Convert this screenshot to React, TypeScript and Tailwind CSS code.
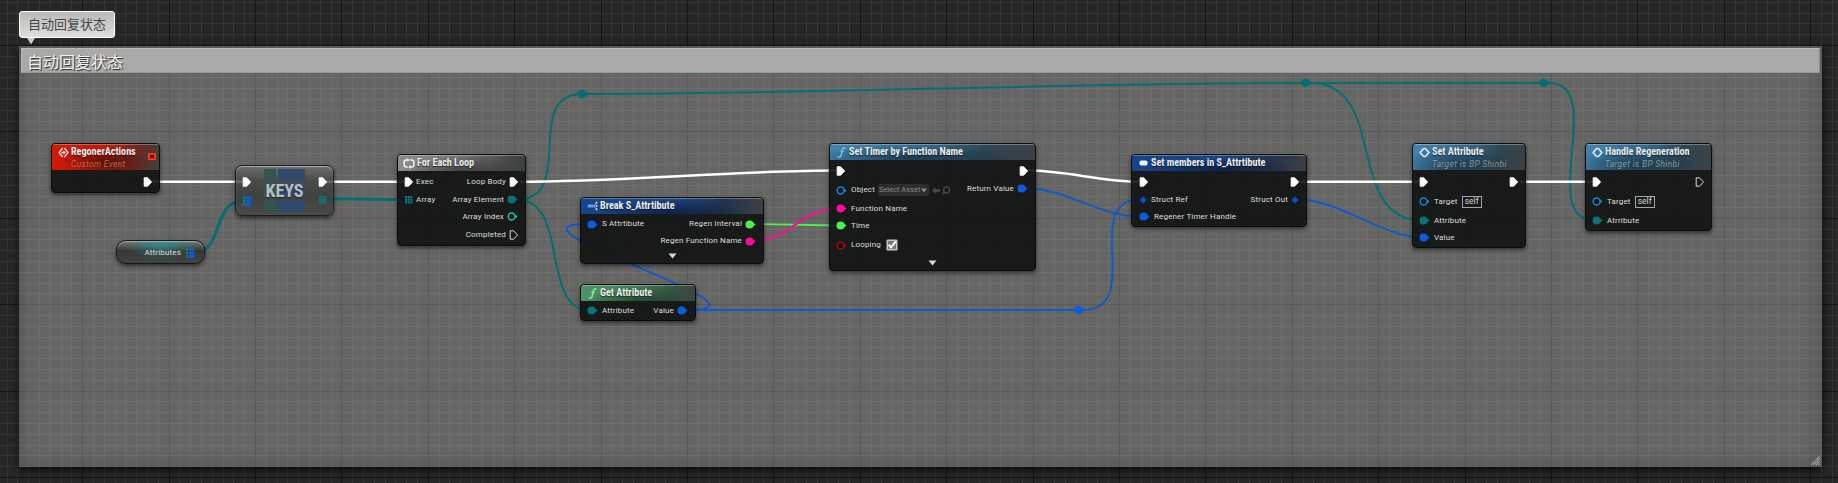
import React from 'react';

const TEAL = '#036f73';
const BLUE = '#0a5ad0';
const PINK = '#ff0a9c';
const GREEN = '#4cf04e';

type PinKind =
  | 'exec' | 'execOpen' | 'array' | 'map' | 'diamond' | 'dot' | 'ring';

function Pin({ kind, color = '#fff' }: { kind: PinKind; color?: string }) {
  switch (kind) {
    case 'exec':
    case 'execOpen':
      return (
        <svg width="9" height="10" viewBox="0 0 9 10" className="flex-none">
          <path
            d="M1.2 .8H4.6L8.2 4.6V5.4L4.6 9.2H1.2Z"
            fill={kind === 'exec' ? '#fff' : 'none'}
            stroke={kind === 'exec' ? '#fff' : '#d8d8d8'}
            strokeWidth="1"
            strokeLinejoin="round"
          />
        </svg>
      );
    case 'array':
      return (
        <svg width="9" height="9" viewBox="0 0 9 9" className="flex-none" fill="#0b8187">
          {[1, 3.7, 6.4].map((y) => [1, 3.7, 6.4].map((x) => <rect key={x + '-' + y} x={x} y={y} width="2" height="2" />))}
        </svg>
      );
    case 'map':
      return (
        <svg width="10" height="10" viewBox="0 0 10 10" className="flex-none">
          {[0.4, 3.7, 7].map((y) => (
            <g key={y}>
              <rect x=".8" y={y} width="2.4" height="2.5" fill="#0b8187" />
              <rect x="4" y={y} width="5.2" height="2.7" fill="#0a5de6" />
            </g>
          ))}
        </svg>
      );
    case 'diamond':
      return (
        <svg width="8" height="8" viewBox="0 0 8 8" className="flex-none">
          <path d="M4 .4 7.6 4 4 7.6.4 4Z" fill="#0a50c8" />
        </svg>
      );
    case 'dot':
      return (
        <svg width="11" height="9" viewBox="0 0 11 9" className="flex-none">
          <circle cx="4.6" cy="4.5" r="4.1" fill={color} />
          <path d="M8 2.4 10.6 4.5 8 6.6Z" fill={color} />
        </svg>
      );
    default:
      return (
        <svg width="11" height="9" viewBox="0 0 11 9" className="flex-none">
          <circle cx="4.6" cy="4.5" r="3.4" fill="#0c1010" stroke={color} strokeWidth="1.5" />
          <path d="M8.2 2.6 10.5 4.5 8.2 6.4Z" fill={color} />
        </svg>
      );
  }
}

const LABEL = "font-['Roboto'] text-[8px] leading-none tracking-[0.16px] text-[#dededd] whitespace-nowrap";

function In({ kind, color, label, className, gap = 'gap-[4px]', children }: {
  kind: PinKind; color?: string; label?: string; className: string; gap?: string; children?: React.ReactNode;
}) {
  return (
    <div className={'flex h-[14px] items-center ' + gap + ' ' + className}>
      <Pin kind={kind} color={color} />
      {label && <span className={LABEL}>{label}</span>}
      {children}
    </div>
  );
}

function Out({ kind, color, label, className, gap = 'gap-[3px]' }: {
  kind: PinKind; color?: string; label?: string; className: string; gap?: string;
}) {
  return (
    <div className={'flex h-[14px] items-center justify-end ' + gap + ' ' + className}>
      {label && <span className={LABEL}>{label}</span>}
      <Pin kind={kind} color={color} />
    </div>
  );
}

function Node({ box, header, icon, title, subtitle, subtitleColor = 'text-[#8a9c8a]', left, right, expand, extra }: {
  box: string; header: string; icon: React.ReactNode; title: string; subtitle?: string; subtitleColor?: string;
  left?: React.ReactNode; right?: React.ReactNode; expand?: boolean; extra?: React.ReactNode;
}) {
  return (
    <section className={'absolute flex flex-col overflow-hidden rounded-[4px] border border-[#0b0c0c] bg-[#0f1211]/90 shadow-[0_2px_4px_rgba(0,0,0,0.55)] ' + box}>
      <header className={'flex flex-none items-start pl-[5px] pr-[7px] shadow-[inset_0_1px_0_rgba(255,255,255,0.3)] ' + (subtitle ? 'h-[26px] ' : 'h-[15.5px] ') + header}>
        <span className="mt-[1.5px] flex h-[13px] w-[12px] flex-none items-center justify-center">{icon}</span>
        <div className="ml-[2px] flex flex-col">
          <h2 className="mt-[1px] h-[13.5px] whitespace-nowrap font-['Roboto_Condensed','Roboto'] text-[10.2px] font-bold leading-[13px] tracking-[-0.03px] text-[#ececec] [text-shadow:0_1px_1px_rgba(0,0,0,0.6)]">{title}</h2>
          {subtitle && <p className={"whitespace-nowrap font-['Roboto'] text-[8.3px] italic leading-[10px] tracking-[0.4px] " + subtitleColor}>{subtitle}</p>}
        </div>
        {extra}
      </header>
      <div className="flex justify-between pl-[6px] pr-[7px]">
        <div className="flex flex-col">{left}</div>
        <div className="flex flex-col">{right}</div>
      </div>
      {expand && (
        <div className="mt-auto flex justify-center pb-[4px]">
          <svg width="9" height="6" viewBox="0 0 9 6"><path d="M.5.5h8L4.5 5.5Z" fill="#d6d6d6" /></svg>
        </div>
      )}
    </section>
  );
}

function EventIcon() {
  return (
    <svg width="11" height="11" viewBox="0 0 11 11" fill="none" stroke="#e6eef2" strokeWidth="1.5">
      <path d="M4.8 1.2 1.1 5.5l3.7 4.3M6.2 1.2l3.7 4.3-3.7 4.3" />
      <path d="M5.5.7v1.6M5.5 8.7v1.6" strokeWidth="1.2" />
    </svg>
  );
}

function CustomEventIcon() {
  return (
    <svg width="11" height="11" viewBox="0 0 11 11" fill="none" stroke="#f2dcd8" strokeWidth="1.3">
      <path d="M4.7 1 1 5.5 4.7 10M6.3 1 10 5.5 6.3 10" />
      <path d="M3.2 5.5h3" />
      <path d="M5.4 3.3 7.9 5.5 5.4 7.7Z" fill="#f2dcd8" stroke="none" />
    </svg>
  );
}

function FunctionIcon({ color }: { color: string }) {
  return (
    <svg width="9" height="11" viewBox="0 0 9 11" fill="none" stroke={color} strokeLinecap="round">
      <path d="M8 1.3C6.6.3 5.7 1.2 5.3 3L4.2 8C3.8 9.9 2.6 10.6 1 9.9" strokeWidth="1.5" />
      <path d="M3.2 4.3h3.5" strokeWidth="1.1" />
    </svg>
  );
}

function LoopIcon() {
  return (
    <svg width="12" height="11" viewBox="0 0 12 11" className="flex-none" fill="none" stroke="#f0f0f0" strokeWidth="1.6">
      <path d="M4.8 9H3.2Q1.2 9 1.2 7V4Q1.2 2 3.2 2H4.6M7 2H8.8Q10.8 2 10.8 4V7Q10.8 9 8.8 9H7.4" />
      <path d="M4.2 0v4L6.8 2ZM7.8 7v4L5.2 9Z" fill="#f0f0f0" stroke="none" />
    </svg>
  );
}

function BreakIcon() {
  return (
    <svg width="11" height="10" viewBox="0 0 11 10" fill="none">
      <rect x=".6" y="3.5" width="6" height="3" rx="1" fill="#6ba0ee" />
      <path d="M9.4 1.6 7 5l2.4 3.4" stroke="#cfe0fa" strokeWidth=".8" />
      <path d="M8.8.7h1.6v1.7H8.8zM8.8 4.1h1.6v1.7H8.8zM8.8 7.6h1.6v1.7H8.8z" fill="#dce8fb" />
    </svg>
  );
}

function Self() {
  return (
    <span className="flex h-[12px] w-[20px] flex-none items-center justify-center border border-[#a4a5a4] font-['Roboto'] text-[8.5px] leading-none text-[#d4d4d3]">self</span>
  );
}

const GRID = 10.8;
const indices = (count: number) => Array.from({ length: count }, (_, i) => i);
const major = (count: number, offset: number) => indices(count).filter((i) => i % 8 === offset);
const minor = (count: number, offset: number) => indices(count).filter((i) => i % 8 !== offset);
const vx = (i: number) => Math.floor(-3.9 + i * GRID + 0.1);
const hy = (i: number) => Math.floor(2.1 + i * GRID + 0.1);
const vLines = (idx: number[]) => idx.map((i) => `M${vx(i)} 0h1V483h-1Z`).join('');
const hLines = (idx: number[]) => idx.map((i) => `M0 ${hy(i)}H1838v1H0Z`).join('');

function GridLines() {
  return (
    <svg width="1838" height="483" className="absolute inset-0" shapeRendering="crispEdges">
      <path d={vLines(minor(172, 0)) + hLines(minor(46, 4))} fill="#343434" />
      <path d={vLines(major(172, 0)) + hLines(major(46, 4))} fill="#141414" />
    </svg>
  );
}

function Wires() {
  return (
    <svg width="1838" height="483" className="absolute inset-0" fill="none">
      <g stroke={TEAL} strokeWidth="2">
        <path d="M517 199.5C577 199.5 522 94 582 94" />
        <path d="M517 199.5C570 199.5 540 310.5 590 310.5" />
        <path d="M582 94C800 94 1080 83 1305 83H1544" />
        <path d="M1310 83C1390 83 1343 220.5 1423 220.5" />
        <path d="M1549 83C1608 83 1536 220.5 1595 220.5" />
      </g>
      <g stroke={TEAL} strokeWidth="3">
        <path d="M194 252.5C225 252.5 210 200.5 245 200.5" />
        <path d="M322 198.5C350 198.5 375 199.6 406 199.6" />
      </g>
      <g stroke={BLUE} strokeWidth="1.8">
        <path d="M688 310C790 310 486 224 588 224" />
        <path d="M688 310H1083C1145 310 1080 199.3 1140 199.3" />
        <path d="M1028 188.5C1066 188.5 1100 216.5 1140 216.5" />
        <path d="M1297 199.3C1340 199.3 1382 237.5 1423 237.5" />
      </g>
      <path d="M755 224L838 225.5" stroke={GREEN} strokeWidth="1.8" />
      <path d="M755 240.7C790 240.7 800 208.5 838 208.5" stroke={PINK} strokeWidth="2" />
      <g stroke="#fff" strokeWidth="2.5">
        <path d="M152 181.7H243M325 181.7H406" />
        <path d="M517 181.7C620 181.7 735 170.6 838 170.6" />
        <path d="M1028 170.6C1066 170.6 1102 181.7 1140 181.7" />
        <path d="M1298 181.7H1422M1517 181.7H1595" />
      </g>
      <g fill={TEAL}>
        <circle cx="581.7" cy="94" r="4.2" /><path d="M585 91.5l4 2.5-4 2.5Z" />
        <circle cx="1305.5" cy="83" r="4.2" /><path d="M1309 80.5l4 2.5-4 2.5Z" />
        <circle cx="1543.5" cy="83" r="4.2" /><path d="M1547 80.5l4 2.5-4 2.5Z" />
      </g>
      <g fill="#0a5de0">
        <circle cx="1078.5" cy="310" r="4.1" /><path d="M1082 307.8l3 2.2-3 2.2Z" />
      </g>
    </svg>
  );
}

const BLUE_HEAD = 'bg-[radial-gradient(ellipse_at_40%_85%,rgba(10,25,38,0.6),transparent_60%),linear-gradient(100deg,#4384ad_0%,#34698c_45%,#2f4656_75%,#3c4142_100%)]';
const NAVY_HEAD = 'bg-[radial-gradient(ellipse_at_50%_90%,rgba(4,12,35,0.6),transparent_60%),linear-gradient(100deg,#174488_0%,#1b437f_50%,#22344d_78%,#3c3f40_100%)]';

export default function App() {
  return (
    <main className="relative h-[483px] w-[1838px] overflow-hidden bg-[#262626]">
      <GridLines />

      <section className="absolute left-[19px] top-[46px] flex h-[421px] w-[1803px] flex-col bg-[#dcdcd8]/35 p-[2px] shadow-[0_3px_8px_rgba(0,0,0,0.75),inset_0_0_18px_rgba(0,0,0,0.22)]">
        <div className="flex h-[25px] items-center border border-b-[#989896] border-l-[#b6b6b4] border-r-[#8c8c8a] border-t-[#bcbcba] bg-[#a9a9a7] pl-[5px]">
          <h1 className="font-['Noto_Sans_CJK_SC',sans-serif] text-[16px] leading-none text-[#f2f2f2] [text-shadow:1px_1px_1px_#222]">自动回复状态</h1>
        </div>
        <svg width="9" height="9" viewBox="0 0 9 9" className="ml-auto mt-auto" stroke="#b4b4b2" strokeWidth="1.1" strokeDasharray="1.2 .5">
          <path d="M0 9 9 0M2.5 9 9 2.5M5 9 9 5M7.5 9 9 7.5" />
        </svg>
      </section>

      <div className="absolute left-[19px] top-[11px] flex h-[27px] w-[96px] items-center justify-center rounded-[3px] border border-white bg-gradient-to-b from-[#b9b9b8] to-[#dededd] pb-[2px]">
        <span className="font-['Noto_Sans_CJK_SC',sans-serif] text-[13px] leading-none text-[#484848]">自动回复状态</span>
      </div>
      <svg width="8" height="7" viewBox="0 0 8 7" className="absolute left-[27px] top-[38px]"><path d="M0 0h8L4 6.5Z" fill="#c9c9c8" /></svg>

      <Wires />

      <Node
        box="left-[51px] top-[143px] h-[50px] w-[109px]"
        header="bg-[radial-gradient(ellipse_at_50%_70%,rgba(50,8,4,0.7),transparent_60%),linear-gradient(100deg,#d01a06_0%,#c01c0a_45%,#6e2a22_78%,#3d3f3e_100%)]"
        icon={<CustomEventIcon />}
        title="RegonerActions"
        subtitle="Custom Event"
        subtitleColor="text-[#b5704f]"
        extra={<span className="ml-auto mt-[9px] mr-[-4px] h-[7px] w-[8px] border-2 border-[#ff3211] bg-[#3a0c06]" />}
        right={<Out kind="exec" className="mt-[4.5px]" />}
      />

      <section className="absolute left-[235px] top-[165px] flex h-[51px] w-[99px] justify-between rounded-[7px] border border-[#1c1d1d] bg-[linear-gradient(180deg,rgba(110,112,110,0.75)_0%,rgba(66,69,67,0.8)_30%,rgba(54,57,55,0.8)_60%,rgba(66,68,66,0.8)_100%)] px-[6px] shadow-[0_2px_4px_rgba(0,0,0,0.6),inset_0_1px_1px_rgba(255,255,255,0.45)]">
        <div className="flex w-[14px] flex-col pt-[9px]">
          <In kind="exec" className="" />
          <In kind="map" className="mt-[5px]" />
        </div>
        <div className="relative mt-[3px] grid h-[43px] w-[41px] grid-cols-[12px_27px] grid-rows-3 gap-x-[2px] gap-y-[3px]">
          <i className="bg-[#30564f]" /><i className="bg-[#324a6c]" />
          <i className="bg-[#30564f]" /><i className="bg-[#324a6c]" />
          <i className="bg-[#30564f]" /><i className="bg-[#324a6c]" />
          <b className="absolute inset-0 flex items-center justify-center font-['Roboto_Condensed','Roboto'] text-[18px] font-bold leading-none text-[#b3bfc2] [text-shadow:0_1px_1px_rgba(0,0,0,0.4)]">KEYS</b>
        </div>
        <div className="flex w-[14px] flex-col items-end pt-[9px]">
          <Out kind="exec" className="" />
          <Out kind="array" className="mt-[3px]" />
        </div>
      </section>

      <section className="absolute left-[116px] top-[240px] flex h-[24px] w-[89px] items-center justify-end gap-[4px] rounded-[10px] border border-[#151616] bg-[radial-gradient(ellipse_at_50%_0%,rgba(40,150,150,0.75),transparent_60%),linear-gradient(180deg,rgba(120,122,120,0.8)_0%,rgba(48,51,49,0.9)_45%,rgba(62,64,62,0.9)_100%)] pr-[9px] pt-px shadow-[0_2px_4px_rgba(0,0,0,0.6),inset_0_1px_1px_rgba(255,255,255,0.4)]">
        <span className={LABEL}>Attributes</span>
        <Pin kind="map" />
      </section>

      <Node
        box="left-[397px] top-[154px] h-[92px] w-[129px]"
        header="bg-[radial-gradient(ellipse_at_50%_100%,rgba(40,40,40,0.65),transparent_65%),linear-gradient(100deg,#908c8e_0%,#757274_50%,#474949_85%,#3c3f3f_100%)]"
        icon={<LoopIcon />}
        title="For Each Loop"
        left={<>
          <In kind="exec" label="Exec" className="mt-[4px]" gap="gap-[3px]" />
          <In kind="array" label="Array" className="mt-[4px]" gap="gap-[3px]" />
        </>}
        right={<>
          <Out kind="exec" label="Loop Body" className="mt-[4px]" />
          <Out kind="dot" color="#0c7279" label="Array Element" className="mt-[4px]" />
          <Out kind="ring" color="#12c9b4" label="Array Index" className="mt-[3px]" />
          <Out kind="execOpen" label="Completed" className="mt-[4px]" />
        </>}
      />

      <Node
        box="left-[580px] top-[197px] h-[67px] w-[184px]"
        header={NAVY_HEAD}
        icon={<BreakIcon />}
        title="Break S_Attrtibute"
        expand
        left={<In kind="dot" color="#0a5de0" label="S Attrtibute" className="mt-[3.5px]" />}
        right={<>
          <Out kind="dot" color={GREEN} label="Regen Interval" className="mt-[3.5px]" />
          <Out kind="dot" color={PINK} label="Regen Function Name" className="mt-[3px]" />
        </>}
      />

      <Node
        box="left-[580px] top-[284px] h-[37px] w-[116px]"
        header="bg-[radial-gradient(ellipse_at_50%_100%,rgba(15,35,22,0.55),transparent_65%),linear-gradient(100deg,#4f946a_0%,#427a58_50%,#375542_78%,#3b4540_100%)]"
        icon={<FunctionIcon color="#7ff0a4" />}
        title="Get Attribute"
        left={<In kind="dot" color="#0c7279" label="Attribute" className="mt-[3px]" />}
        right={<Out kind="dot" color="#0a5de0" label="Value" className="mt-[3px]" />}
      />

      <Node
        box="left-[829px] top-[143px] h-[128px] w-[207px]"
        header={BLUE_HEAD}
        icon={<FunctionIcon color="#5cc4f6" />}
        title="Set Timer by Function Name"
        expand
        left={<>
          <In kind="exec" className="mt-[4px]" />
          <In kind="ring" color="#0c8ce0" label="Object" className="mt-[5.5px]">
            <span className="ml-[-1px] flex h-[12px] w-[51px] items-center justify-between rounded-[2px] bg-[#2b2e2d] pl-[1px] pr-[2px] font-['Roboto'] text-[7.6px] leading-none text-[#858786]">
              <span className="whitespace-nowrap tracking-[-0.05px]">Select Asset</span>
              <svg width="6" height="5" viewBox="0 0 6 5" className="flex-none"><path d="M0 .5h6L3 4.5Z" fill="#8a8c8b" /></svg>
            </span>
            <svg width="19" height="9" viewBox="0 0 19 9" className="ml-[-1px]" fill="none" stroke="#474a49" strokeWidth="1.3">
              <path d="M0 4.5 3.6 1v2.3H8v2.4H3.6V8Z" fill="#474a49" stroke="none" />
              <circle cx="14.6" cy="4" r="3" /><path d="M12.4 6.2 10.4 8.3" />
            </svg>
          </In>
          <In kind="dot" color={PINK} label="Function Name" className="mt-[4.5px]" />
          <In kind="dot" color={GREEN} label="Time" className="mt-[3px]" />
          <In kind="ring" color="#a80a06" label="Looping" className="mt-[5.5px]">
            <svg width="12" height="12" viewBox="0 0 12 12" className="ml-px">
              <rect x=".5" y=".5" width="11" height="11" rx="1" fill="#c4c4c3" />
              <rect x="2" y="2" width="8" height="8" fill="#777877" />
              <path d="M2.6 5.6 5 8.4 9.8 2.4" fill="none" stroke="#fff" strokeWidth="1.9" />
            </svg>
          </In>
        </>}
        right={<>
          <Out kind="exec" className="mt-[4px]" />
          <Out kind="dot" color="#0a5de0" label="Return Value" className="mt-[4px]" />
        </>}
      />

      <Node
        box="left-[1131px] top-[154px] h-[73px] w-[176px]"
        header={NAVY_HEAD}
        icon={<svg width="9" height="6" viewBox="0 0 9 6"><rect x=".5" y=".5" width="8" height="5" rx="1.8" fill="#eef2f8" /></svg>}
        title="Set members in S_Attrtibute"
        left={<>
          <In kind="exec" className="mt-[4px] ml-px" />
          <In kind="diamond" label="Struct Ref" className="mt-[4px] ml-px" />
          <In kind="dot" color="#0a5de0" label="Regener Timer Handle" className="mt-[3px] ml-px" />
        </>}
        right={<>
          <Out kind="exec" className="mt-[4px]" />
          <Out kind="diamond" label="Struct Out" className="mt-[4px]" />
        </>}
      />

      <Node
        box="left-[1412px] top-[143px] h-[105px] w-[114px]"
        header={BLUE_HEAD}
        icon={<EventIcon />}
        title="Set Attribute"
        subtitle="Target is BP Shinbi"
        left={<>
          <In kind="exec" className="mt-[4.5px]" />
          <In kind="ring" color="#0c8ce0" label="Target" className="mt-[6px]"><Self /></In>
          <In kind="dot" color="#0c7279" label="Attribute" className="mt-[5px]" />
          <In kind="dot" color="#0a5de0" label="Value" className="mt-[3px]" />
        </>}
        right={<Out kind="exec" className="mt-[4.5px]" />}
      />

      <Node
        box="left-[1585px] top-[143px] h-[88px] w-[127px]"
        header={BLUE_HEAD}
        icon={<EventIcon />}
        title="Handle Regeneration"
        subtitle="Target is BP Shinbi"
        left={<>
          <In kind="exec" className="mt-[4.5px]" />
          <In kind="ring" color="#0c8ce0" label="Target" className="mt-[6px]"><Self /></In>
          <In kind="dot" color="#0c7279" label="Atrribute" className="mt-[5px]" />
        </>}
        right={<Out kind="execOpen" className="mt-[4.5px]" />}
      />
    </main>
  );
}
